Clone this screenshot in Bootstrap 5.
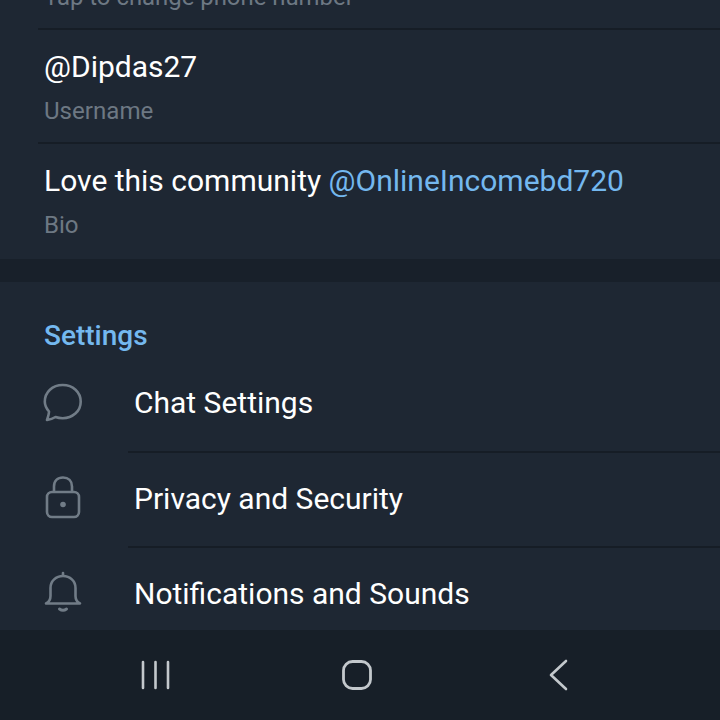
<!DOCTYPE html>
<html lang="en">
<head>
<meta charset="utf-8">
<title>Settings</title>
<link href="https://cdn.jsdelivr.net/npm/bootstrap@5.3.0/dist/css/bootstrap.min.css" rel="stylesheet">
<style>
html,body{height:720px;overflow:hidden;background:#18202a;font-family:Roboto,"Liberation Sans",sans-serif}
.screen{height:720px}
.scroller{height:630px;overflow:hidden}
.panel{background:#1e2733}
.panel-top{height:259px;overflow:hidden}
.panel-gap{height:23px;background:#18202a}
.panel-settings{height:348px;overflow:hidden}
.clip-row{height:28px;padding-left:44px;overflow:hidden}
.clip-row span{display:block;margin-top:-17px;line-height:28px;font-size:23.9px;color:#6d7883}
.info-row{margin-left:38px;padding-left:6px;border-top:2px solid #161d26;height:114px}
.info-main{color:#fff;font-size:30px;line-height:34px;padding-top:19.5px}
.info-sub{color:#6d7883;font-size:24.1px;line-height:28px;padding-top:13px}
.tg-link{color:#74b8ef}
.section-title{color:#74b8ef;font-size:28px;font-weight:500;line-height:30px;padding:39px 0 0 44px;height:75px}
.menu-row{height:95.5px}
.menu-icon{width:134px;flex:none}
.icon-chat{padding:26px 0 0 43px}
.icon-lock{padding:22.5px 0 0 43.5px}
.icon-bell{padding:23.3px 0 0 44px}
.menu-label{flex:1;color:#fff;font-size:30px;line-height:34px;align-self:stretch;border-bottom:2px solid #161d26;margin-left:-6px;padding:29px 0 0 6px}
.menu-row:last-child .menu-label{border-bottom:0}
.sys-nav{height:90px;background:#171f28;padding-left:140px}
.nav-home{margin-left:168.500px}
.nav-back{margin-left:175.500px}
</style>
</head>
<body>
<div class="screen d-flex flex-column">
  <div class="scroller">
    <div class="panel panel-top">
      <div class="clip-row"><span>Tap to change phone number</span></div>
      <div class="info-row">
        <div class="info-main">@Dipdas27</div>
        <div class="info-sub">Username</div>
      </div>
      <div class="info-row">
        <div class="info-main">Love this community <span class="tg-link">@OnlineIncomebd720</span></div>
        <div class="info-sub">Bio</div>
      </div>
    </div>
    <div class="panel-gap"></div>
    <div class="panel panel-settings">
      <div class="section-title">Settings</div>
      <div class="menu-row d-flex align-items-start">
        <div class="menu-icon icon-chat">
          <svg class="d-block" width="40" height="40" viewBox="0 0 40 40" fill="none" stroke="#717c87" stroke-width="2.6" stroke-linejoin="round" stroke-linecap="round"><path d="M12.500 34C10 35.500 7 36.500 4 37C5 34 6 31 6 28.500C3 25 1.800 22 1.800 18.700C1.800 9 9.500 2 19.700 2S37.700 9 37.700 18.700S29.500 35.200 19.700 35.200C17 35.200 14.700 34.800 12.500 34Z"/></svg>
        </div>
        <div class="menu-label">Chat Settings</div>
      </div>
      <div class="menu-row d-flex align-items-start">
        <div class="menu-icon icon-lock">
          <svg class="d-block" width="40" height="44" viewBox="0 0 40 44" fill="none" stroke="#717c87" stroke-width="2.6"><rect x="3" y="17" width="32" height="25" rx="5"/><path d="M10 17V11.500C10 6 13.500 2.500 19 2.500S28 6 28 11.500V17"/><circle cx="19" cy="29.500" r="2.800" fill="#717c87" stroke="none"/></svg>
        </div>
        <div class="menu-label">Privacy and Security</div>
      </div>
      <div class="menu-row d-flex align-items-start">
        <div class="menu-icon icon-bell">
          <svg class="d-block" width="40" height="42" viewBox="0 0 40 42" fill="none" stroke="#717c87" stroke-width="2.600" stroke-linecap="round" stroke-linejoin="round"><path d="M2 32.500C5 31 6.500 28.500 6.500 25V17C6.500 10 12 5 19 5S31.500 10 31.500 17V25C31.500 28.500 33 31 36 32.500Z"/><path d="M19 2V4"/><path d="M15.500 38C17.500 39.400 20.500 39.400 22.500 38" stroke-width="3"/></svg>
        </div>
        <div class="menu-label">Notifications and Sounds</div>
      </div>
    </div>
  </div>
  <div class="sys-nav d-flex align-items-center">
    <svg width="32" height="30" viewBox="0 0 32 30" fill="none" stroke="#c3c8cc" stroke-width="2.600" stroke-linecap="round"><path d="M3 2V28M15.500 2V28M28 2V28"/></svg>
    <svg class="nav-home" width="32" height="32" viewBox="0 0 32 32" fill="none" stroke="#c3c8cc" stroke-width="2.800"><rect x="2.500" y="2.500" width="27" height="27" rx="9"/></svg>
    <svg class="nav-back" width="22" height="32" viewBox="0 0 22 32" fill="none" stroke="#c3c8cc" stroke-width="2.600" stroke-linecap="round" stroke-linejoin="round"><path d="M18 2L3 16L18 30"/></svg>
  </div>
</div>
<script src="https://cdn.jsdelivr.net/npm/bootstrap@5.3.0/dist/js/bootstrap.bundle.min.js"></script>
</body>
</html>
